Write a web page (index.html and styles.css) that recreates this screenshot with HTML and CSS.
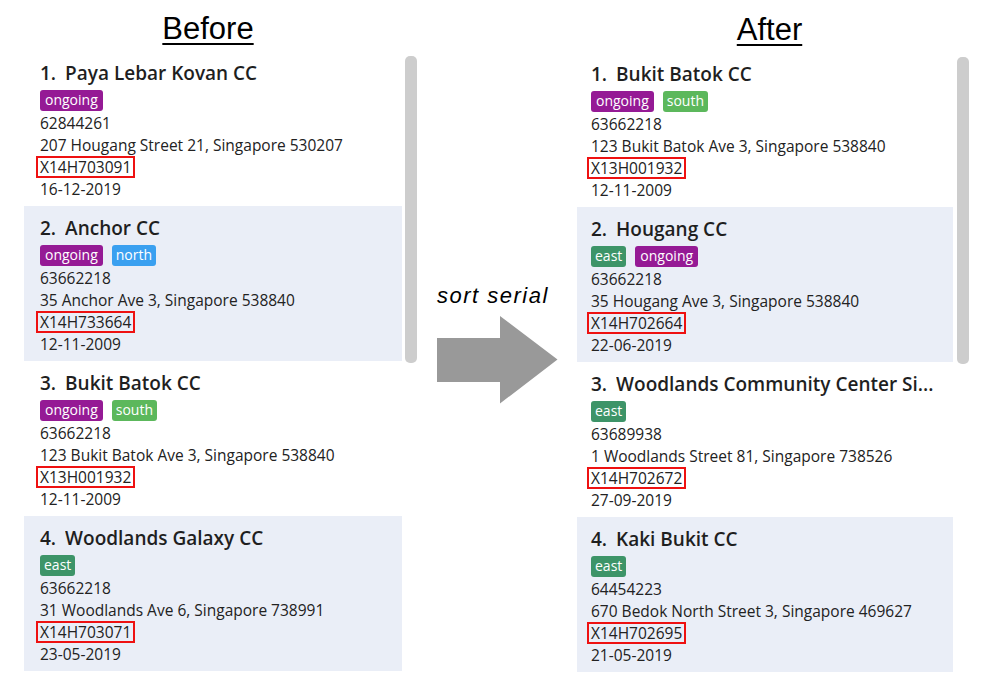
FILE: index.html
```html
<!DOCTYPE html>
<html>
<head>
<meta charset="utf-8">
<link rel="stylesheet" href="styles.css">
</head>
<body>
<div class="page">
  <section class="panel panel-left">
    <h1 class="heading">Before</h1>
    <div class="list">
      <div class="cards">
        <div class="card">
          <div class="title"><span class="idx">1.</span><span class="name">Paya Lebar Kovan CC</span></div>
          <div class="tags"><span class="tag ongoing">ongoing</span></div>
          <div class="line">62844261</div>
          <div class="line">207 Hougang Street 21, Singapore 530207</div>
          <div class="line"><span class="serial">X14H703091</span></div>
          <div class="line">16-12-2019</div>
        </div>
        <div class="card alt">
          <div class="title"><span class="idx">2.</span><span class="name">Anchor CC</span></div>
          <div class="tags"><span class="tag ongoing">ongoing</span><span class="tag north">north</span></div>
          <div class="line">63662218</div>
          <div class="line">35 Anchor Ave 3, Singapore 538840</div>
          <div class="line"><span class="serial">X14H733664</span></div>
          <div class="line">12-11-2009</div>
        </div>
        <div class="card">
          <div class="title"><span class="idx">3.</span><span class="name">Bukit Batok CC</span></div>
          <div class="tags"><span class="tag ongoing">ongoing</span><span class="tag south">south</span></div>
          <div class="line">63662218</div>
          <div class="line">123 Bukit Batok Ave 3, Singapore 538840</div>
          <div class="line"><span class="serial">X13H001932</span></div>
          <div class="line">12-11-2009</div>
        </div>
        <div class="card alt">
          <div class="title"><span class="idx">4.</span><span class="name">Woodlands Galaxy CC</span></div>
          <div class="tags"><span class="tag east">east</span></div>
          <div class="line">63662218</div>
          <div class="line">31 Woodlands Ave 6, Singapore 738991</div>
          <div class="line"><span class="serial">X14H703071</span></div>
          <div class="line">23-05-2019</div>
        </div>
      </div>
      <div class="scrollbar"></div>
    </div>
  </section>

  <section class="middle">
    <div class="caption">sort serial</div>
    <svg class="arrow" width="121" height="88" viewBox="0 0 121 88">
      <path d="M0 22 H63 V0 L120.5 43.5 L63 87.5 V66 H0 Z" fill="#999999"/>
    </svg>
  </section>

  <section class="panel panel-right">
    <h1 class="heading">After</h1>
    <div class="list">
      <div class="cards">
        <div class="card">
          <div class="title"><span class="idx">1.</span><span class="name">Bukit Batok CC</span></div>
          <div class="tags"><span class="tag ongoing">ongoing</span><span class="tag south">south</span></div>
          <div class="line">63662218</div>
          <div class="line">123 Bukit Batok Ave 3, Singapore 538840</div>
          <div class="line"><span class="serial">X13H001932</span></div>
          <div class="line">12-11-2009</div>
        </div>
        <div class="card alt">
          <div class="title"><span class="idx">2.</span><span class="name">Hougang CC</span></div>
          <div class="tags"><span class="tag east">east</span><span class="tag ongoing">ongoing</span></div>
          <div class="line">63662218</div>
          <div class="line">35 Hougang Ave 3, Singapore 538840</div>
          <div class="line"><span class="serial">X14H702664</span></div>
          <div class="line">22-06-2019</div>
        </div>
        <div class="card">
          <div class="title"><span class="idx">3.</span><span class="name">Woodlands Community Center Si...</span></div>
          <div class="tags"><span class="tag east">east</span></div>
          <div class="line">63689938</div>
          <div class="line">1 Woodlands Street 81, Singapore 738526</div>
          <div class="line"><span class="serial">X14H702672</span></div>
          <div class="line">27-09-2019</div>
        </div>
        <div class="card alt">
          <div class="title"><span class="idx">4.</span><span class="name">Kaki Bukit CC</span></div>
          <div class="tags"><span class="tag east">east</span></div>
          <div class="line">64454223</div>
          <div class="line">670 Bedok North Street 3, Singapore 469627</div>
          <div class="line"><span class="serial">X14H702695</span></div>
          <div class="line">21-05-2019</div>
        </div>
      </div>
      <div class="scrollbar"></div>
    </div>
  </section>
</div>
</body>
</html>
```

FILE: styles.css
```css
* { box-sizing: border-box; }
html, body { margin: 0; padding: 0; background: #ffffff; }
body {
  width: 981px;
  height: 674px;
  overflow: hidden;
  font-family: "Open Sans", "Noto Sans", sans-serif;
  color: #222222;
}
.page {
  display: flex;
  padding: 11px 0 0 24px;
}
.panel { display: flex; flex-direction: column; }
.panel-left { width: 394px; }
.panel-right { width: 393px; margin-top: 1px; }
.heading {
  margin: 0 0 4px 0;
  font-family: "Liberation Sans", Arial, sans-serif;
  font-weight: 400;
  font-size: 31px;
  line-height: 36px;
  text-align: center;
  text-decoration: underline;
  text-decoration-thickness: 2px;
  text-underline-offset: 4px;
  color: #000;
}
.panel-left .heading { padding-right: 26px; }
.panel-right .heading { padding-right: 8px; }
.list { display: flex; gap: 3px; }
.cards { display: flex; flex-direction: column; width: 378px; }
.panel-right .cards { width: 376px; }
.scrollbar {
  width: 12px;
  height: 307px;
  margin-top: 5px;
  background: #cdcdcd;
  border-radius: 5px;
}
.panel-right .scrollbar { margin-left: 1px; }
.card {
  height: 155px;
  padding: 8px 14px 0 16px;
  background: #ffffff;
}
.card.alt { background: #eaeef7; }
.panel-right .card { padding-left: 14px; }
.title {
  display: flex;
  gap: 9px;
  height: 28px;
  line-height: 28px;
  font-size: 19px;
  font-weight: 600;
  color: #1f1f1f;
  white-space: nowrap;
}
.title .name {
  overflow: hidden;
  min-width: 0;
}
.tags {
  display: flex;
  gap: 9px;
  margin: 3px 0 1px 0;
  height: 21px;
}
.tag {
  display: inline-block;
  height: 21px;
  line-height: 20px;
  padding: 0 4px;
  border-radius: 3px;
  color: #ffffff;
  font-size: 14px;
}
.tag.ongoing { background: #951a95; padding: 0 5px; }
.tag.north { background: #3aa0f0; }
.tag.south { background: #5cb85c; }
.tag.east { background: #3d9468; }
.line {
  height: 22px;
  line-height: 22px;
  font-size: 15.5px;
  white-space: nowrap;
}
.serial {
  display: inline-block;
  height: 22px;
  line-height: 18px;
  margin-left: -4px;
  padding: 0 2px;
  border: 2px solid #ee1111;
  vertical-align: top;
}
.middle {
  width: 159px;
  padding: 272px 0 0 19px;
  display: flex;
  flex-direction: column;
}
.caption {
  font-family: "Liberation Sans", Arial, sans-serif;
  font-style: italic;
  font-size: 22px;
  line-height: 26px;
  letter-spacing: 1.5px;
  color: #000;
}
.arrow { margin-top: 7px; display: block; }
```
